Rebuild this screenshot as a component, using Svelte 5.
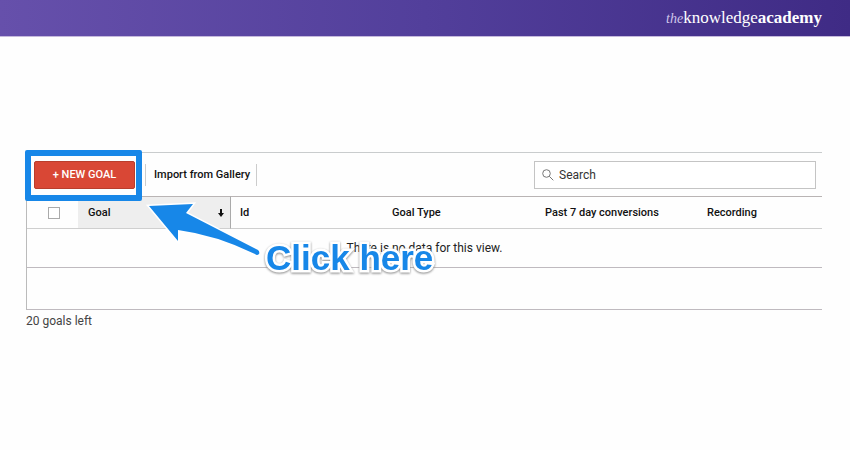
<script>
	let query = ''
	let allSelected = false
	let goals = []
	let goalsLeft = 20

	const columns = [
		{ key: 'id', label: 'Id' },
		{ key: 'type', label: 'Goal Type' },
		{ key: 'conversions', label: 'Past 7 day conversions' },
		{ key: 'recording', label: 'Recording' }
	]
</script>

<div class="page">
	<header>
		<a class="brand" href="/"><i>the</i>knowledge<b>academy</b></a>
	</header>

	<main>
		<div class="panel">
			<div class="toolbar">
				<div class="highlight">
					<button class="new-goal" type="button">+ NEW GOAL</button>
				</div>
				<button class="import" type="button">Import from Gallery</button>
				<label class="search">
					<svg viewBox="0 0 12 12" aria-hidden="true">
						<circle cx="4.5" cy="4.5" r="3.8" />
						<path d="M7.3 7.3 L11.3 11.3" />
					</svg>
					<input type="text" placeholder="Search" aria-label="Search" bind:value={query}>
				</label>
			</div>

			<table>
				<thead>
					<tr>
						<th class="check">
							<input type="checkbox" aria-label="Select all goals" bind:checked={allSelected}>
						</th>
						<th class="goal" aria-sort="descending">
							<div class="sort">
								Goal
								<svg viewBox="0 0 6 8" aria-hidden="true">
									<path d="M3 0 V5" />
									<path class="head" d="M0 4 H6 L3 8 Z" />
								</svg>
							</div>
						</th>
						{#each columns as column}
							<th class={column.key}>{column.label}</th>
						{/each}
					</tr>
				</thead>
				<tbody>
					{#if goals.length === 0}
						<tr class="empty">
							<td colspan="6">There is no data for this view.</td>
						</tr>
					{/if}
					<tr class="footer">
						<td colspan="6"></td>
					</tr>
				</tbody>
			</table>

			<div class="callout">
				<svg viewBox="0 0 120 60" aria-hidden="true">
					<path d="M5 10 L49 8 L42 17 L114 54 Q116 56 115 58 Q113 60 111 58 Q72 39 34 34 L34 45 Z" />
				</svg>
				<span>Click here</span>
			</div>
		</div>
		<p>{goalsLeft} goals left</p>
	</main>
</div>

<style>

:global(body) {
	background:#FEFEFE;
}

.page {
	font-family:Roboto, "Liberation Sans", sans-serif;
	color:#222;
}

header {
	display:flex;
	justify-content:flex-end;
	align-items:center;
	height:36px;
	padding:0 28px;
	background:linear-gradient(90deg, #6650AB 0%, #523F9B 50%, #3F2B85 100%);
	border-bottom:1px solid #C5B9DC;
}

.brand {
	font-family:"Liberation Serif", serif;
	font-size:17px;
	line-height:20px;
	color:#FFF;
	text-decoration:none;
}

.brand i {
	font-size:14px;
	color:#CFC6EA;
}

main {
	padding:115px 28px 0 26px;
}

.panel {
	position:relative;
	border-top:1px solid #C9CCCD;
}

.toolbar {
	display:flex;
	align-items:center;
	height:43px;
	padding:0 6px 0 8px;
}

.highlight {
	position:relative;
}

.highlight::after {
	content:'';
	position:absolute;
	inset:-11px -7px -12px -9px;
	border:6px solid #1787E8;
	border-radius:2px;
	pointer-events:none;
}

button {
	margin:0;
	border:0;
	font-family:inherit;
	cursor:pointer;
}

.new-goal {
	display:block;
	width:101px;
	height:28px;
	padding:0;
	border:1px solid #B93D2C;
	border-radius:2px;
	background:#D94735;
	color:#FFF;
	font-size:11px;
	font-weight:500;
}

.import {
	height:22px;
	margin-left:10px;
	padding:0 6px 0 8px;
	border-left:1px solid #CCC;
	border-right:1px solid #CCC;
	background:none;
	color:#111;
	font-size:11px;
	font-weight:500;
	white-space:nowrap;
}

.search {
	display:flex;
	align-items:center;
	gap:5px;
	box-sizing:border-box;
	width:282px;
	height:28px;
	margin-left:auto;
	padding:0 7px;
	border:1px solid #C4C4C4;
	background:#FFF;
}

.search svg {
	flex:none;
	width:12px;
	height:12px;
	fill:none;
	stroke:#777;
}

.search input {
	flex:1;
	min-width:0;
	padding:0;
	border:0;
	outline:0;
	background:none;
	font:12px Roboto, sans-serif;
	color:#333;
}

.search input::placeholder {
	color:#333;
	opacity:1;
}

table {
	width:100%;
	table-layout:fixed;
	border-spacing:0;
	border-left:1px solid #BBB;
}

th, td {
	box-sizing:border-box;
	padding:0 9px;
}

th {
	height:33px;
	border-top:1px solid #B9B4B4;
	border-bottom:1px solid #CFCFCF;
	font-size:11px;
	line-height:12px;
	font-weight:500;
	text-align:left;
	color:#111;
	white-space:nowrap;
}

.check {
	width:51px;
	padding:0 0 0 3px;
	text-align:center;
}

.check input {
	display:block;
	appearance:none;
	width:12px;
	height:12px;
	margin:0 auto;
	border:1px solid #AAA;
	background:#FFF;
}

.check input:checked {
	background:#1787E8;
}

.goal {
	width:153px;
	padding:0 6px 0 10px;
	border-right:1px solid #AAA;
	background:#EEE;
}

.sort {
	display:flex;
	justify-content:space-between;
	align-items:center;
}

.sort svg {
	width:6px;
	height:8px;
	fill:none;
	stroke:#111;
	stroke-width:2;
}

.sort .head {
	fill:#111;
	stroke:none;
}

.id {
	width:152px;
}

.type {
	width:153px;
}

.conversions {
	width:162px;
}

td {
	border-bottom:1px solid #BFBABF;
	font-size:12px;
	text-align:center;
}

.empty td {
	height:39px;
}

.footer td {
	height:42px;
}

.callout {
	position:absolute;
	top:43px;
	left:118px;
	display:flex;
	align-items:flex-end;
	gap:2px;
	pointer-events:none;
}

.callout svg {
	width:120px;
	height:60px;
	margin-bottom:22px;
	overflow:visible;
	fill:#1787E8;
	stroke:#FFF;
	stroke-width:3;
	paint-order:stroke;
}

.callout span {
	font-family:"Liberation Sans", sans-serif;
	font-size:35px;
	font-weight:700;
	line-height:40px;
	white-space:nowrap;
	color:#1787E8;
	-webkit-text-stroke:5px #FFF;
	paint-order:stroke fill;
	filter:drop-shadow(0 1px 1px #888);
}

p {
	margin:3px 0 0;
	font-size:12px;
	line-height:16px;
	color:#444;
}
</style>
